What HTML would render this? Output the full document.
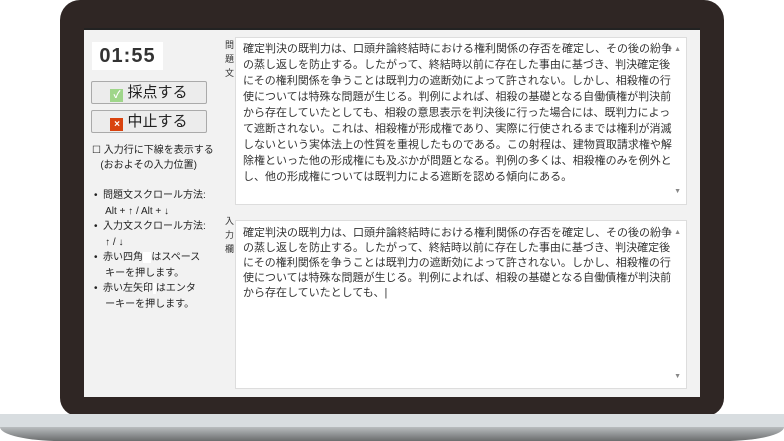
<!DOCTYPE html>
<html><head><meta charset="utf-8"><style>
*{margin:0;padding:0;box-sizing:border-box}
body{width:784px;height:441px;background:#fff;position:relative;overflow:hidden;font-family:"Liberation Sans","Noto Sans CJK JP",sans-serif;}
.frame{position:absolute;left:60px;top:0;width:664px;height:416px;background:#2f2624;border-radius:20px 20px 18px 18px}
.base1{position:absolute;left:0;top:414px;width:784px;height:14px;background:#d8dde0}
.base2{position:absolute;left:0;top:427px;width:784px;height:14px;background:linear-gradient(#b9bdbf,#6b6d6e);border-radius:0 0 60px 60px/0 0 14px 14px}
.screen{position:absolute;left:84px;top:28px;width:616px;height:369px;background:#f2f2f2;border-top:2px solid #222}
.timer{position:absolute;left:8px;top:12px;width:71px;height:28px;background:#fff;font:bold 20px "Liberation Sans",sans-serif;color:#333;text-align:center;line-height:28px;letter-spacing:1px}
.btn{position:absolute;left:7px;width:116px;height:23px;background:#ececec;border:1px solid #aaa;border-radius:2px;font-size:15px;color:#222;line-height:21px;text-align:center}
.ic{display:inline-block;width:13px;height:13px;vertical-align:-1px;margin-right:4px;color:#fff;font-size:10px;line-height:13px;text-align:center;font-weight:bold}
.side{position:absolute;font-size:10px;color:#222;line-height:15px;white-space:nowrap}
.ta{position:absolute;left:151px;width:452px;background:#fff;border:1px solid #ddd;padding:3px 0 0 7px;font-size:11px;line-height:16px;color:#333;white-space:nowrap}
.lab{position:absolute;left:141px;font-size:9px;line-height:14px;color:#333;width:10px}
.arr{position:absolute;right:5px;font-size:7px;color:#888}
</style></head><body>
<div class="frame"></div>
<div class="base1"></div><div class="base2"></div>
<div class="screen">
<div class="timer">01:55</div>
<div class="btn" style="top:51px"><span class="ic" style="background:#9fd68a">✓</span>採点する</div>
<div class="btn" style="top:80px"><span class="ic" style="background:#d9430f">×</span>中止する</div>
<div class="side" style="left:8px;top:113px">☐ 入力行に下線を表示する<br>&nbsp;&nbsp;&nbsp;(おおよその入力位置)</div>
<div class="side" style="left:10px;top:158px;line-height:15.5px">•&nbsp; 問題文スクロール方法:<br>&nbsp;&nbsp;&nbsp; Alt + ↑ / Alt + ↓<br>•&nbsp; 入力文スクロール方法:<br>&nbsp;&nbsp;&nbsp; ↑ / ↓<br>•&nbsp; 赤い四角<span style="background:#fff">&nbsp;&nbsp;&nbsp;</span>はスペース<br>&nbsp;&nbsp;&nbsp; キーを押します。<br>•&nbsp; 赤い左矢印<span style="background:#fff">&nbsp;</span>はエンタ<br>&nbsp;&nbsp;&nbsp; ーキーを押します。</div>
<div class="lab" style="top:8px">問<br>題<br>文</div>
<div class="lab" style="top:184px">入<br>力<br>欄</div>
<div class="ta" style="top:7px;height:168px">確定判決の既判力は、口頭弁論終結時における権利関係の存否を確定し、その後の紛争<br>の蒸し返しを防止する。したがって、終結時以前に存在した事由に基づき、判決確定後<br>にその権利関係を争うことは既判力の遮断効によって許されない。しかし、相殺権の行<br>使については特殊な問題が生じる。判例によれば、相殺の基礎となる自働債権が判決前<br>から存在していたとしても、相殺の意思表示を判決後に行った場合には、既判力によっ<br>て遮断されない。これは、相殺権が形成権であり、実際に行使されるまでは権利が消滅<br>しないという実体法上の性質を重視したものである。この射程は、建物買取請求権や解<br>除権といった他の形成権にも及ぶかが問題となる。判例の多くは、相殺権のみを例外と<br>し、他の形成権については既判力による遮断を認める傾向にある。<span class="arr" style="top:4px">▲</span><span class="arr" style="bottom:4px">▼</span></div>
<div class="ta" style="top:190px;height:169px;padding-top:5px;line-height:15px">確定判決の既判力は、口頭弁論終結時における権利関係の存否を確定し、その後の紛争<br>の蒸し返しを防止する。したがって、終結時以前に存在した事由に基づき、判決確定後<br>にその権利関係を争うことは既判力の遮断効によって許されない。しかし、相殺権の行<br>使については特殊な問題が生じる。判例によれば、相殺の基礎となる自働債権が判決前<br>から存在していたとしても、|<span class="arr" style="top:4px">▲</span><span class="arr" style="bottom:4px">▼</span></div>
</div>
</body></html>
